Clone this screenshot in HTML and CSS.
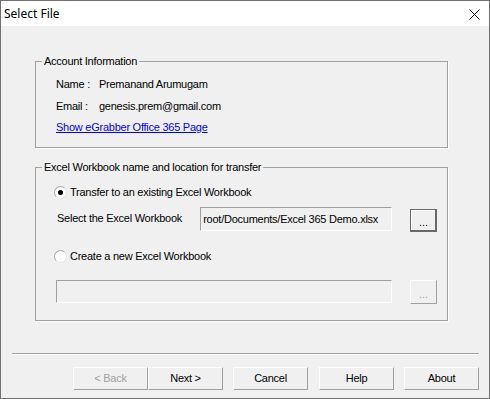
FILE: index.html
```html
<!DOCTYPE html>
<html>
<head>
<meta charset="utf-8">
<title>Select File</title>
<link rel="stylesheet" href="styles.css">
</head>
<body>
<div class="window">
  <div class="titlebar">
    <span class="title">Select File</span>
    <span class="close"><svg width="11" height="11" viewBox="0 0 11 11"><path d="M0.5 0.5 L10.5 10.5 M10.5 0.5 L0.5 10.5" stroke="#000" stroke-width="1" fill="none"/></svg></span>
  </div>
  <div class="content">
    <fieldset class="group group-account">
      <legend>Account Information</legend>
      <div class="info-row"><span class="info-label">Name :</span><span>Premanand Arumugam</span></div>
      <div class="info-row row-email"><span class="info-label">Email :</span><span>genesis.prem@gmail.com</span></div>
      <a class="link" href="#">Show eGrabber Office 365 Page</a>
    </fieldset>
    <fieldset class="group group-excel">
      <legend>Excel Workbook name and location for transfer</legend>
      <div class="radio-row"><span class="radio checked"></span><span>Transfer to an existing Excel Workbook</span></div>
      <div class="select-row">
        <span class="select-label">Select the Excel Workbook</span>
        <div class="textbox readonly">root/Documents/Excel 365 Demo.xlsx</div>
        <span class="browse default">...</span>
      </div>
      <div class="radio-row radio-new"><span class="radio"></span><span>Create a new Excel Workbook</span></div>
      <div class="new-row">
        <div class="textbox disabled"></div>
        <span class="browse disabled">...</span>
      </div>
    </fieldset>
    <div class="separator"></div>
    <div class="buttons">
      <span class="btn disabled">&lt; Back</span>
      <span class="btn">Next &gt;</span>
      <span class="btn gap">Cancel</span>
      <span class="btn gap wide">Help</span>
      <span class="btn gap">About</span>
    </div>
  </div>
</div>
</body>
</html>
```

FILE: styles.css
```css
* { box-sizing: border-box; }
html, body { margin: 0; padding: 0; }
body {
  font-family: "Liberation Sans", Arial, sans-serif;
  font-size: 11px;
  letter-spacing: -0.25px;
  color: #000;
  background: #fff;
}
.window {
  width: 490px;
  height: 399px;
  border: 1px solid #707070;
  display: flex;
  flex-direction: column;
  background: #f0f0f0;
}
.titlebar {
  height: 25px;
  background: #fff;
  display: flex;
  align-items: center;
  justify-content: space-between;
  padding: 0 9px 0 3px;
}
.title {
  font-family: "Noto Sans", "Open Sans", sans-serif;
  font-size: 12px;
  letter-spacing: 0;
  line-height: 16px;
  color: #000;
}
.close { display: flex; margin-top: 1px; }
.content {
  flex: 1;
  display: flex;
  flex-direction: column;
  padding-top: 29px;
}
.group {
  margin: 0 0 0 34px;
  width: 413px;
  min-inline-size: 0;
  border: 1px solid #a0a0a0;
  box-shadow: 1px 1px 0 #fff;
  padding: 10px 10px 13px 20px;
  display: flex;
  flex-direction: column;
}
.group legend {
  font-size: 11px;
  line-height: 13px;
  padding: 0 2px;
  margin-left: -14px;
}
.info-row { display: flex; line-height: 13px; height: 13px; }
.row-email { margin-top: 9px; }
.info-label { width: 43px; }
.link {
  margin-top: 8px;
  line-height: 13px;
  color: #0000ff;
  text-decoration: underline;
  align-self: flex-start;
}
.group-excel {
  margin-top: 13px;
  padding: 12px 10px 16px 20px;
}
.radio-row {
  display: flex;
  align-items: center;
  line-height: 13px;
  height: 13px;
  margin-left: -2px;
  gap: 3px;
}
.radio {
  width: 13px;
  height: 13px;
  border-radius: 50%;
  background: #fff;
  border: 1px solid #a8a8a8;
  border-right-color: #e4e4e4;
  border-bottom-color: #e4e4e4;
  display: flex;
  align-items: center;
  justify-content: center;
}
.radio.checked::after {
  content: "";
  width: 5px;
  height: 5px;
  border-radius: 50%;
  background: #000;
}
.select-row {
  display: flex;
  align-items: flex-start;
  margin-top: 8px;
  height: 25px;
}
.select-label {
  width: 144px;
  line-height: 13px;
  margin-top: 5px;
  margin-left: 1px;
}
.textbox {
  border: 1px solid #a0a0a0;
  border-right-color: #fff;
  border-bottom-color: #fff;
  background: #f0f0f0;
  line-height: 13px;
  padding: 5px 2px;
}
.textbox.readonly {
  width: 193px;
  height: 24px;
  white-space: nowrap;
  overflow: hidden;
}
.browse {
  width: 27px;
  height: 23px;
  margin-left: 18px;
  margin-top: 2px;
  display: flex;
  align-items: flex-end;
  justify-content: center;
  padding-bottom: 3px;
  line-height: 11px;
  font-size: 11px;
  letter-spacing: 0;
  border: 1px solid #fff;
  border-right-color: #a0a0a0;
  border-bottom-color: #a0a0a0;
}
.browse.default {
  border: 1px solid #696969;
  box-shadow: inset -1px -1px 0 #696969, inset 1px 1px 0 #fff;
}
.browse.disabled { color: #a0a0a0; margin-top: 0; height: 24px; }
.radio-new { margin-top: 18px; }
.new-row {
  display: flex;
  align-items: flex-start;
  margin-top: 17px;
}
.textbox.disabled { width: 337px; height: 23px; }
.separator {
  margin: 32px 0 0 11px;
  width: 467px;
  height: 2px;
  border-top: 1px solid #a0a0a0;
  border-bottom: 1px solid #fff;
}
.buttons {
  display: flex;
  justify-content: flex-end;
  margin: 12px 10px 0 0;
}
.btn {
  width: 75px;
  height: 23px;
  display: flex;
  align-items: center;
  justify-content: center;
  border: 1px solid #fff;
  border-right-color: #a0a0a0;
  border-bottom-color: #a0a0a0;
  line-height: 13px;
  font-size: 11px;
}
.btn.disabled { color: #a0a0a0; }
.btn.gap { margin-left: 10px; }
.btn.wide { margin-left: 11px; }
```
